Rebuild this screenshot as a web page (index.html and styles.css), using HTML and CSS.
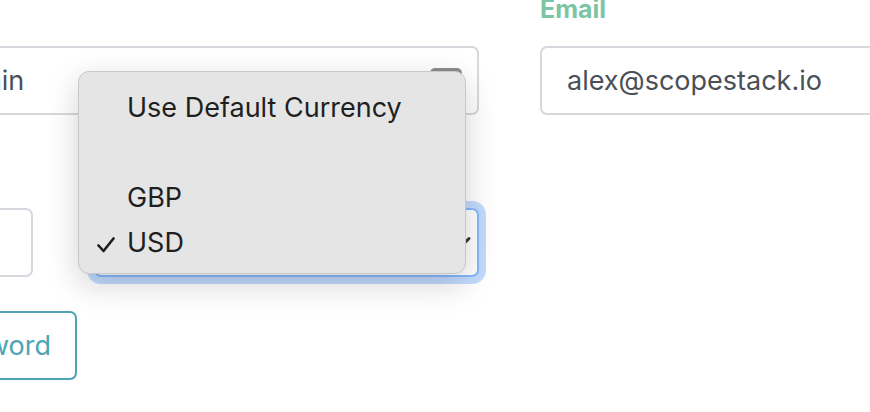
FILE: index.html
```html
<!DOCTYPE html>
<html lang="en">
<head>
  <meta charset="UTF-8" />
  <title>Profile</title>
  <link rel="stylesheet" href="styles.css">
</head>
<body>

  <!-- Profile form -->
  <form class="profile">
    <div class="col-left">
      <div class="field">
        <label class="label"></label>
        <div class="control control-box">
          <span>Admin</span>
          <span class="autofill"></span>
        </div>
      </div>

      <div class="pair">
        <div class="field">
          <label class="label"></label>
          <input class="control" type="text" value="" aria-label="Rate">
        </div>
        <div class="field">
          <label class="label"></label>
          <select class="control select focused" aria-label="Currency">
            <option>USD</option>
          </select>
        </div>
      </div>

      <div class="actions">
        <button type="button" class="btn-outline">Change Password</button>
      </div>
    </div>

    <div class="col-right">
      <div class="field">
        <label class="label">Email</label>
        <input class="control" type="text" value="alex@scopestack.io">
      </div>
    </div>
  </form>

  <!-- Open currency menu -->
  <div class="menu">
    <div class="menu-item"><span class="tick"></span>Use Default Currency</div>
    <div class="menu-item"><span class="tick"></span></div>
    <div class="menu-item"><span class="tick"></span>GBP</div>
    <div class="menu-item selected">
      <span class="tick">
        <svg width="18" height="16" viewBox="0 0 18 16"><polyline points="1.5,8.5 6.5,14 16.5,1.5" fill="none" stroke="#1c1c1c" stroke-width="2.6" stroke-linecap="round" stroke-linejoin="round"/></svg>
      </span>USD
    </div>
  </div>

</body>
</html>
```

FILE: styles.css
```css
body {
  margin: 0;
  background: #fff;
  font-family: Inter, "Noto Sans", sans-serif;
  overflow: hidden;
}

.profile {
  display: grid;
  grid-template-columns: 563px 380px;
  column-gap: 61px;
  margin: -6px 0 0 -84px;
}

.col-left {
  display: flex;
  flex-direction: column;
}

.field {
  display: flex;
  flex-direction: column;
  gap: 22px;
}

.label {
  font-weight: 700;
  font-size: 25px;
  line-height: 30px;
  min-height: 30px;
  color: #7cc4a4;
}

.control {
  height: 69px;
  width: 100%;
  box-sizing: border-box;
  border: 2px solid #d5d8dd;
  border-radius: 7px;
  padding: 0 25px;
  font-family: Inter, "Noto Sans", sans-serif;
  font-size: 27px;
  color: #495057;
  background: #fff;
  outline: none;
}

.control-box {
  display: flex;
  align-items: center;
}

.autofill {
  margin-left: auto;
  margin-right: -10px;
  width: 32px;
  height: 26px;
  border-radius: 5px;
  background: #8d8d8d;
}

.pair {
  display: grid;
  grid-template-columns: 117px 1fr;
  column-gap: 61px;
  margin-top: 41px;
}

.select {
  appearance: none;
  -webkit-appearance: none;
  background-image: url("data:image/svg+xml,%3csvg xmlns='http://www.w3.org/2000/svg' viewBox='0 0 16 16'%3e%3cpath fill='none' stroke='%23343a40' stroke-linecap='round' stroke-linejoin='round' stroke-width='2' d='M2 5l6 6 6-6'/%3e%3c/svg%3e");
  background-repeat: no-repeat;
  background-position: right 5px center;
  background-size: 24px 24px;
}

.select.focused {
  border-color: #86b7fe;
  box-shadow: 0 0 0 7px rgba(13, 110, 253, 0.25);
}

.actions {
  width: 161px;
  display: flex;
  justify-content: flex-end;
  margin-top: 34px;
}

.btn-outline {
  flex-shrink: 0;
  height: 69px;
  padding: 0 24px;
  border: 2px solid #4ea3b7;
  border-radius: 7px;
  background: #fff;
  color: #4ea3b7;
  font-family: Inter, "Noto Sans", sans-serif;
  font-size: 27px;
  white-space: nowrap;
}

/* native popup look */
.menu {
  position: absolute;
  left: 78px;
  top: 71px;
  width: 388px;
  height: 203px;
  box-sizing: border-box;
  padding: 13px 0 8px;
  background: #e5e5e5;
  border: 1px solid #c8c8c8;
  border-radius: 11px;
  box-shadow: 0 10px 32px rgba(0, 0, 0, 0.18);
}

.menu-item {
  height: 45px;
  display: flex;
  align-items: center;
  font-size: 27px;
  color: #1f1f1f;
}

.tick {
  width: 18px;
  height: 16px;
  margin: 4px 12px 0 18px;
  display: flex;
}
```
